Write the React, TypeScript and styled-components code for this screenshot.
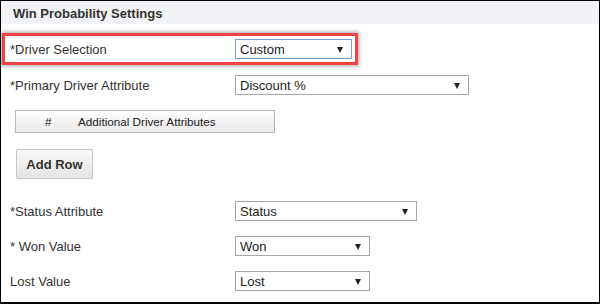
import React from "react";
import styled, { createGlobalStyle } from "styled-components";

const GlobalStyle = createGlobalStyle`
  html, body {
    margin: 0;
    padding: 0;
    background: #ffffff;
  }
  body {
    font-family: "Liberation Sans", Arial, sans-serif;
    color: #333333;
  }
`;

type Field = {
  label: string;
  value: string;
  width: number;
  gap: number;
};

const lowerFields: Field[] = [
  { label: "*Status Attribute", value: "Status", width: 182, gap: 22 },
  { label: "* Won Value", value: "Won", width: 135, gap: 15 },
  { label: "Lost Value", value: "Lost", width: 135, gap: 15 },
];

function Select({
  value,
  width,
  focused,
}: {
  value: string;
  width: number;
  focused?: boolean;
}) {
  return (
    <SelectBox $width={width} $focused={focused}>
      <span>{value}</span>
      <Arrow />
    </SelectBox>
  );
}

function App() {
  return (
    <>
      <GlobalStyle />
      <Panel>
        <Header>Win Probability Settings</Header>
        <Highlight>
          <Label>*Driver Selection</Label>
          <Select value="Custom" width={117} focused />
        </Highlight>
        <Row $gap={10}>
          <Label>*Primary Driver Attribute</Label>
          <Select value="Discount %" width={234} />
        </Row>
        <AttrTable>
          <span className="num">#</span>
          <span>Additional Driver Attributes</span>
        </AttrTable>
        <AddButton>Add Row</AddButton>
        {lowerFields.map((f) => (
          <Row key={f.label} $gap={f.gap}>
            <Label>{f.label}</Label>
            <Select value={f.value} width={f.width} />
          </Row>
        ))}
      </Panel>
    </>
  );
}

const Panel = styled.div`
  width: 600px;
  height: 304px;
  box-sizing: border-box;
  border: 1px solid #000000;
  border-bottom-width: 2px;
  display: flex;
  flex-direction: column;
  background: #ffffff;
`;

const Header = styled.div`
  height: 23px;
  box-sizing: border-box;
  padding: 2px 0 0 12px;
  background: #f1f2f6;
  display: flex;
  align-items: center;
  font-size: 13px;
  font-weight: bold;
  color: #333333;
`;

const Highlight = styled.div`
  margin: 9px 0 0 1px;
  width: 356px;
  height: 32px;
  box-sizing: border-box;
  border: 3px solid #f04444;
  box-shadow: 0 0 4px 1px rgba(0, 0, 0, 0.35);
  display: flex;
  align-items: center;
  padding-left: 5px;
`;

const Row = styled.div<{ $gap: number }>`
  margin-top: ${(p) => p.$gap}px;
  padding-left: 9px;
  height: 20px;
  display: flex;
  align-items: center;
`;

const Label = styled.div`
  width: 225px;
  flex-shrink: 0;
  font-size: 13px;
  color: #333333;
`;

const SelectBox = styled.div<{ $width: number; $focused?: boolean }>`
  width: ${(p) => p.$width}px;
  height: 20px;
  box-sizing: border-box;
  border: 1px solid ${(p) => (p.$focused ? "#7a9ad8" : "#a6a6a6")};
  display: flex;
  align-items: center;
  justify-content: space-between;
  padding: 0 8px 0 4px;
  font-size: 13px;
  color: #222222;
  background: #ffffff;
`;

const Arrow = styled.i`
  width: 0;
  height: 0;
  border-left: 3.5px solid transparent;
  border-right: 3.5px solid transparent;
  border-top: 6px solid #222222;
  margin-top: 1px;
`;

const AttrTable = styled.div`
  margin: 15px 0 0 14px;
  width: 260px;
  height: 23px;
  box-sizing: border-box;
  border: 1px solid #b5b5b5;
  background: linear-gradient(#ffffff, #e8e8e8);
  display: flex;
  align-items: center;
  font-size: 11.7px;
  color: #222222;

  .num {
    width: 62px;
    padding-left: 29px;
    box-sizing: border-box;
  }
`;

const AddButton = styled.button`
  margin: 16px 0 0 15px;
  width: 77px;
  height: 30px;
  box-sizing: border-box;
  border: 1px solid #c6c6c6;
  border-radius: 2px;
  background: linear-gradient(#f9f9f9, #e4e4e4);
  font-family: "Liberation Sans", Arial, sans-serif;
  font-size: 13px;
  font-weight: bold;
  color: #333333;
  padding: 0;
  cursor: pointer;
`;

export default App;
